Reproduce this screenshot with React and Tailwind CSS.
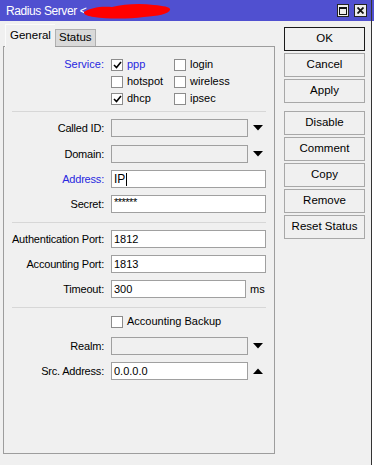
import React from 'react';

const blue = 'text-[#2828e0]';

function Check({ checked }) {
  return (
    <span className="w-[12px] h-[12px] bg-white border border-[#8c8c8c] flex items-center justify-center shrink-0">
      {checked && (
        <svg width="9" height="8" viewBox="0 0 9 8">
          <path d="M1 4 L3.5 6.5 L8 1" fill="none" stroke="#000" strokeWidth="1.6" />
        </svg>
      )}
    </span>
  );
}

function CheckItem({ checked, label, color = 'text-black', w = 'w-[63px]' }) {
  return (
    <div className={`flex items-center gap-[4px] ${w}`}>
      <Check checked={checked} />
      <span className={color}>{label}</span>
    </div>
  );
}

function Arrow({ up }) {
  return (
    <svg width="10" height="6" viewBox="0 0 10 6" className="ml-[5px] shrink-0">
      <path d={up ? 'M0 6 L5 0.5 L10 6 Z' : 'M0 0 L10 0 L5 5.5 Z'} fill="#000" />
    </svg>
  );
}

function Field({ label, labelColor = 'text-black', mt, children }) {
  return (
    <div className={`flex items-center ${mt}`}>
      <div className={`w-[101px] text-right pr-[1px] tracking-[-0.2px] ${labelColor}`}>{label}</div>
      <div className="ml-[6px] flex items-center">{children}</div>
    </div>
  );
}

function Input({ w, disabled, children }) {
  return (
    <div
      className={`${w} h-[18px] border border-[#a0a0a0] ${
        disabled ? 'bg-[#f0f0f0]' : 'bg-white'
      } flex items-center pl-[2px] leading-none`}
    >
      {children}
    </div>
  );
}

function Sep({ mt }) {
  return <div className={`${mt} ml-[8px] w-[254px] h-px bg-[#d7d7d7]`} />;
}

function Btn({ children, def, mt = 'mt-[2px]' }) {
  return (
    <div
      className={`${mt} w-[81px] h-[24px] flex items-center justify-center bg-[#f0f0f0] border ${
        def ? 'border-[#1a1a1a]' : 'border-[#a8a8a8]'
      }`}
    >
      {children}
    </div>
  );
}

export default function App() {
  return (
    <div
      className="w-[374px] h-[465px] flex bg-white overflow-hidden text-[11px] text-black"
      style={{ fontFamily: '"Liberation Sans", Arial, sans-serif' }}
    >
      <div className="w-[372px] h-full bg-[#f0f0f0] border-r border-[#333] flex flex-col">
        {/* Title bar */}
        <div className="h-[21px] bg-[#5050d0] flex items-center pl-[6px] pr-[4px] shrink-0">
          <span className="text-white text-[12px] tracking-[-0.4px] leading-none">Radius Server &lt;</span>
          <svg width="88" height="17" viewBox="0 0 88 17" className="-ml-[2px]">
            <path
              d="M0 10 C6 6 16 4 28 5 C40 2 56 1 70 3 C80 4 87 5 86 8 C84 12 74 14 60 15 C44 17 24 17 10 15 C3 14 -1 12 0 10 Z"
              fill="#ff0000"
            />
          </svg>
          <div className="flex-1" />
          <div className="w-[12px] h-[13px] bg-[#ececec] border border-[#222] flex items-center justify-center">
            <div className="w-[8px] h-[8px] border border-[#111] border-t-2" />
          </div>
          <div className="ml-[5px] w-[13px] h-[13px] bg-[#ececec] border border-[#222] flex items-center justify-center">
            <svg width="7" height="7" viewBox="0 0 7 7">
              <path d="M0.5 0.5 L6.5 6.5 M6.5 0.5 L0.5 6.5" stroke="#111" strokeWidth="1.8" />
            </svg>
          </div>
        </div>

        {/* Body */}
        <div className="flex flex-1">
          <div className="w-[276px] pl-[3px] pt-[3px] flex flex-col">
            {/* Tabs */}
            <div className="h-[22px] flex items-end pl-[2px]">
              <div className="relative z-10 -mb-px w-[50px] h-[23px] bg-[#f0f0f0] border-l border-t border-[#fbfbfb] flex items-center pl-[4px] text-[11.5px]">
                General
              </div>
              <div className="w-[41px] h-[17px] bg-[#d9d9d9] border border-[#b0b0b0] border-b-0 flex items-center pl-[3px] text-[11.5px]">
                Status
              </div>
            </div>

            {/* Panel */}
            <div className="w-[272px] h-[408px] border border-[#9d9d9d] flex flex-col">
              {/* Service checkboxes */}
              <div className="mt-[9px] flex">
                <div className={`w-[101px] text-right pr-[1px] h-[17px] flex items-center justify-end ${blue}`}>
                  Service:
                </div>
                <div className="ml-[6px] flex flex-col">
                  <div className="flex h-[17px] items-center">
                    <CheckItem checked label="ppp" color={blue} />
                    <CheckItem label="login" />
                  </div>
                  <div className="flex h-[17px] items-center">
                    <CheckItem label="hotspot" />
                    <CheckItem label="wireless" />
                  </div>
                  <div className="flex h-[17px] items-center">
                    <CheckItem checked label="dhcp" />
                    <CheckItem label="ipsec" />
                  </div>
                </div>
              </div>

              <Sep mt="mt-[4px]" />

              <Field label="Called ID:" mt="mt-[7px]">
                <Input w="w-[137px]" disabled />
                <Arrow />
              </Field>
              <Field label="Domain:" mt="mt-[8px]">
                <Input w="w-[137px]" disabled />
                <Arrow />
              </Field>
              <Field label="Address:" labelColor={blue} mt="mt-[7px]">
                <Input w="w-[155px]">
                  <span className="text-[12px]">IP</span>
                  <span className="ml-px w-px h-[13px] bg-black" />
                </Input>
              </Field>
              <Field label="Secret:" mt="mt-[7px]">
                <Input w="w-[155px]">
                  <span className="text-[11px] tracking-[-0.5px] -mt-[3px]">******</span>
                </Input>
              </Field>

              <Sep mt="mt-[9px]" />

              <Field label="Authentication Port:" mt="mt-[7px]">
                <Input w="w-[155px]">1812</Input>
              </Field>
              <Field label="Accounting Port:" mt="mt-[7px]">
                <Input w="w-[155px]">1813</Input>
              </Field>
              <Field label="Timeout:" mt="mt-[7px]">
                <Input w="w-[135px]">300</Input>
                <span className="ml-[4px]">ms</span>
              </Field>

              <Sep mt="mt-[9px]" />

              <div className="mt-[5px] h-[17px] flex items-center pl-[107px]">
                <CheckItem label="Accounting Backup" w="w-auto" />
              </div>

              <Field label="Realm:" mt="mt-[7px]">
                <Input w="w-[137px]" disabled />
                <Arrow />
              </Field>
              <Field label="Src. Address:" mt="mt-[7px]">
                <Input w="w-[137px]">0.0.0.0</Input>
                <Arrow up />
              </Field>
            </div>
          </div>

          {/* Buttons */}
          <div className="pl-[8px] pt-[6px] flex flex-col text-[11.5px]">
            <Btn def mt="mt-0">OK</Btn>
            <Btn>Cancel</Btn>
            <Btn>Apply</Btn>
            <Btn mt="mt-[8px]">Disable</Btn>
            <Btn>Comment</Btn>
            <Btn>Copy</Btn>
            <Btn>Remove</Btn>
            <Btn>Reset Status</Btn>
          </div>
        </div>
      </div>
      <div className="flex-1 flex flex-col">
        <div className="h-[21px] bg-[#5050d0]" />
        <div className="flex-1 bg-white" />
      </div>
    </div>
  );
}
